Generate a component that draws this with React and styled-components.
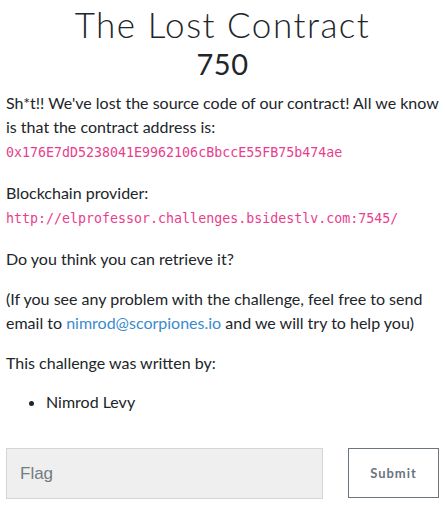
import styled, { createGlobalStyle } from "styled-components"

const Global = createGlobalStyle`
    html, body {
        margin: 0;
        padding: 0;
        background: #fff;
    }
    body {
        font-family: "Lato", "Liberation Sans", sans-serif;
        color: #212529;
    }
`

export default function App() {
    return (
        <>
            <Global />
            <Modal>
                <Title>The Lost Contract</Title>
                <Points>750</Points>
                <Description>
                    <p>
                        Sh*t!! We've lost the source code of our contract! All we know is that the contract address is:
                        <br />
                        <code>0x176E7dD5238041E9962106cBbccE55FB75b474ae</code>
                    </p>
                    <p>
                        Blockchain provider:
                        <br />
                        <code>http://elprofessor.challenges.bsidestlv.com:7545/</code>
                    </p>
                    <p>Do you think you can retrieve it?</p>
                    <p>
                        (If you see any problem with the challenge, feel free to send email to{" "}
                        <a href="#">nimrod@scorpiones.io</a> and we will try to help you)
                    </p>
                    <p>This challenge was written by:</p>
                    <ul>
                        <li>Nimrod Levy</li>
                    </ul>
                </Description>
                <SubmitRow>
                    <FlagInput placeholder="Flag" />
                    <SubmitButton>Submit</SubmitButton>
                </SubmitRow>
            </Modal>
        </>
    )
}

const Modal = styled.div`
    padding: 0 6px;
`

const Title = styled.h3`
    margin: 0;
    padding-top: 4px;
    text-align: center;
    font-family: "Lato", sans-serif;
    font-weight: 300;
    font-size: 35px;
    line-height: 40px;
    letter-spacing: 1.5px;
    color: #212529;
`

const Points = styled.h4`
    margin: 0;
    text-align: center;
    font-family: "Lato", sans-serif;
    font-weight: 400;
    font-size: 29px;
    line-height: 40px;
    letter-spacing: 0.5px;
    color: #212529;
`

const Description = styled.div`
    padding-top: 7px;
    font-size: 16px;
    line-height: 24px;

    p {
        margin: 0 0 16px;
    }

    code {
        font-family: "DejaVu Sans Mono", "Liberation Mono", monospace;
        font-size: 13.3px;
        color: #e83e8c;
    }

    a {
        color: #3a8bcd;
        text-decoration: none;
    }

    ul {
        margin: 0 0 16px;
        padding-left: 40px;
    }

    li {
        margin-top: -1px;
    }
`

const SubmitRow = styled.div`
    display: flex;
    gap: 25px;
    padding-top: 18px;
`

const FlagInput = styled.input`
    flex: 1;
    height: 51px;
    box-sizing: border-box;
    background: #efefef;
    border: 1px solid #d2d5d9;
    padding: 0 13px;
    font-family: "Liberation Sans", Arial, sans-serif;
    font-size: 17px;
    color: #495057;
    outline: none;

    &::placeholder {
        color: #737b83;
    }
`

const SubmitButton = styled.button`
    width: 91px;
    height: 50px;
    box-sizing: border-box;
    background: #fff;
    border: 1px solid #6c757d;
    font-family: "Lato", sans-serif;
    font-weight: 700;
    font-size: 13px;
    letter-spacing: 1px;
    color: #6c757d;
`
